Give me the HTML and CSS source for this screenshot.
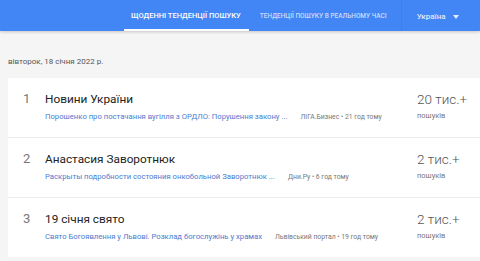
FILE: index.html
```html
<!DOCTYPE html>
<html lang="uk">
<head>
<meta charset="utf-8">
<link rel="stylesheet" href="styles.css">
</head>
<body>
<header class="topbar">
  <nav class="tabs">
    <a class="tab active">Щоденні тенденції пошуку</a>
    <a class="tab">Тенденції пошуку в реальному часі</a>
  </nav>
  <div class="divider"></div>
  <div class="geo">Україна <span class="caret"></span></div>
</header>
<main class="content">
  <div class="date">вівторок, 18 січня 2022 р.</div>
  <div class="list">
    <div class="row">
      <div class="idx">1</div>
      <div class="details">
        <div class="title">Новини України</div>
        <div class="meta"><span class="link">Порошенко про постачання вугілля з ОРДЛО: Порушення закону ...</span><span class="source">ЛІГА.Бизнес • 21 год тому</span></div>
      </div>
      <div class="count">
        <div class="num">20 тис.+</div>
        <div class="lbl">пошуків</div>
      </div>
    </div>
    <div class="row">
      <div class="idx">2</div>
      <div class="details">
        <div class="title">Анастасия Заворотнюк</div>
        <div class="meta"><span class="link">Раскрыты подробности состояния онкобольной Заворотнюк ...</span><span class="source">Дни.Ру • 6 год тому</span></div>
      </div>
      <div class="count">
        <div class="num">2 тис.+</div>
        <div class="lbl">пошуків</div>
      </div>
    </div>
    <div class="row">
      <div class="idx">3</div>
      <div class="details">
        <div class="title">19 січня свято</div>
        <div class="meta"><span class="link">Свято Богоявлення у Львові. Розклад богослужінь у храмах</span><span class="source">Львівський портал • 19 год тому</span></div>
      </div>
      <div class="count">
        <div class="num">2 тис.+</div>
        <div class="lbl">пошуків</div>
      </div>
    </div>
  </div>
</main>
</body>
</html>
```
FILE: styles.css
```css
* { box-sizing: border-box; }
html, body { margin: 0; padding: 0; }
body {
  width: 480px;
  height: 261px;
  overflow: hidden;
  background: #f5f5f5;
  font-family: Roboto, "Noto Sans", sans-serif;
  color: #333;
}
.topbar {
  height: 31px;
  background: #4285f4;
  display: flex;
  align-items: stretch;
  padding-left: 124px;
  box-shadow: 0 1px 3px rgba(0,0,0,0.2);
  position: relative;
}
.tabs { display: flex; align-items: stretch; }
.tab {
  display: flex;
  align-items: center;
  padding: 2px 7px 0;
  font-size: 7.5px;
  font-weight: 500;
  text-transform: uppercase;
  color: rgba(255,255,255,0.72);
  border-bottom: 2px solid transparent;
  white-space: nowrap;
}
.tab.active { color: #fff; border-bottom-color: #fff; padding-right: 8px; margin-right: 4px; }
.tab:not(.active) { font-size: 6.5px; }
.divider { width: 1px; background: rgba(0,0,0,0.04); margin: 0 15px 0 7px; }
.geo {
  display: flex;
  align-items: center;
  gap: 7px;
  font-size: 8px;
  font-weight: 500;
  color: rgba(255,255,255,0.85);
  padding-top: 2px;
}
.caret {
  width: 0; height: 0;
  border-left: 3.5px solid transparent;
  border-right: 3.5px solid transparent;
  border-top: 4px solid rgba(255,255,255,0.85);
}
.content { padding: 0 0 0 8px; }
.date {
  font-size: 8px;
  color: #555;
  padding-top: 25px;
  height: 47px;
  line-height: 12px;
}
.list { display: flex; flex-direction: column; gap: 1px; background: #ececec; }
.row {
  height: 59px;
  background: #fff;
  display: flex;
  align-items: flex-start;
}
.idx {
  width: 37px;
  padding-left: 15px;
  padding-top: 13px;
  font-size: 13px;
  color: #777;
  line-height: 16px;
}
.details { flex: 1; padding-top: 13px; min-width: 0; }
.title { font-size: 11.8px; line-height: 16px; color: #222; }
.meta { margin-top: 5px; font-size: 7.7px; line-height: 10px; white-space: nowrap; }
.link { color: #4a7bd0; }
.source { color: #777; margin-left: 13px; font-size: 6.8px; }
.count { width: 63px; padding-top: 12px; }
.num { font-size: 13.5px; line-height: 18px; color: #555; font-weight: 300; }
.lbl { font-size: 7.5px; color: #777; margin-top: 3px; line-height: 10px; }
```
